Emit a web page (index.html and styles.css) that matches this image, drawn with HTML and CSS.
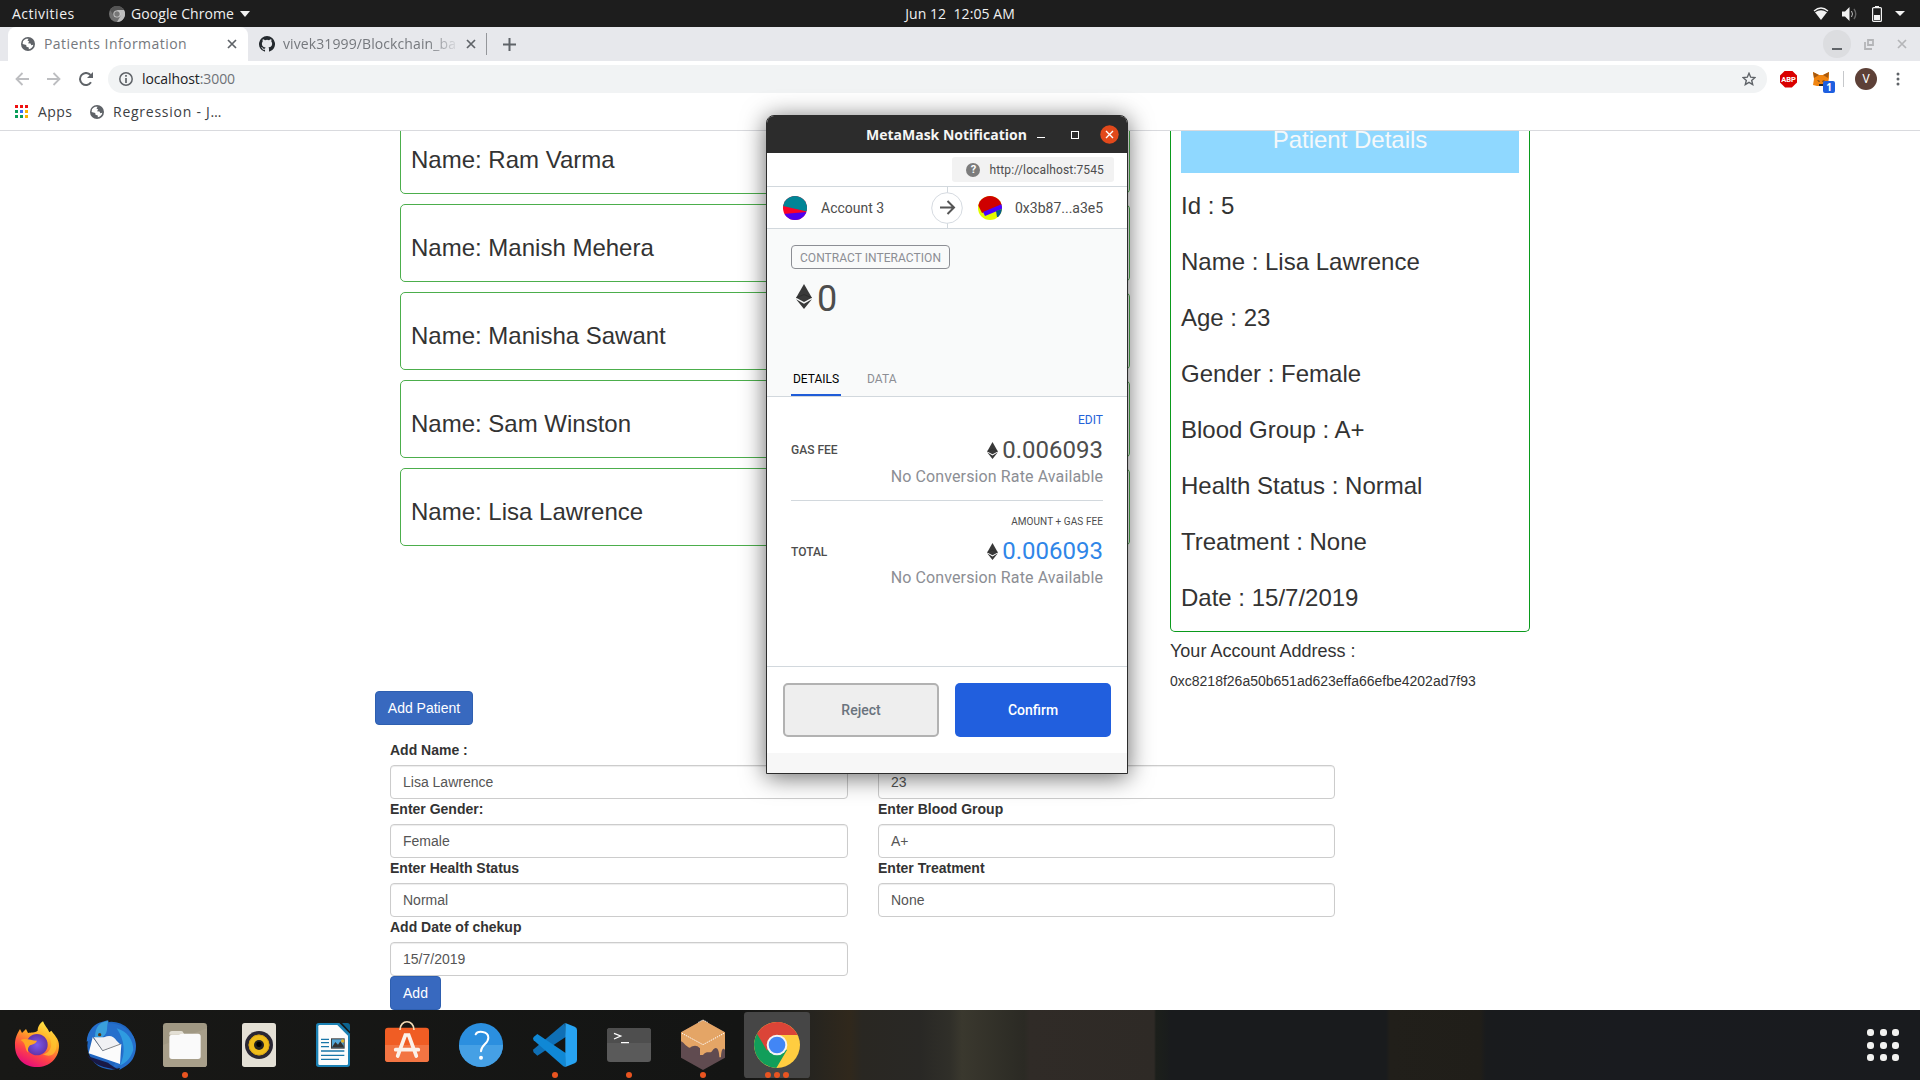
FILE: index.html
```html
<!DOCTYPE html>
<html lang="en">
<head>
<meta charset="utf-8">
<title>Patients Information</title>
<link rel="stylesheet" href="styles.css">
</head>
<body>
<svg class="defs" width="0" height="0">
  <symbol id="globe" viewBox="0 0 14 14"><circle cx="7" cy="7" r="7" fill="#5f6368"/><path d="M2 4.2C4 1.6 6 1.5 7.600 1.800L6.500 3.500 8.200 4.500 7 6.200 9.500 6.400 10.300 8.300 12.300 7.700C12 10 10 12 7.800 12.300L7.800 10.400 5.500 9.700 5.200 8 1.600 7Z" fill="#fff"/></symbol>
  <symbol id="cross" viewBox="0 0 10 10"><path d="M1 1l8 8M9 1L1 9" fill="none" stroke="currentColor" stroke-width="1.700"/></symbol>
  <symbol id="eth" viewBox="0 0 48 76"><path d="M24 0L48 42 24 55 0 42Z" fill="#393939"/><path d="M0 46l24 14 24-14-24 30Z" fill="#393939"/><path d="M0 42l24-10 24 10" fill="none" stroke="#282828" stroke-width="2"/></symbol>
</svg>

<header class="topbar">
  <div class="topbar-left">
    <span class="activities">Activities</span>
    <svg width="16" height="16" viewBox="0 0 16 16"><circle cx="8" cy="8" r="8" fill="#707070"/><path d="M8 4h7a8 8 0 0 1-7 12l3.500-6Z" fill="#bcbcbc"/><path d="M1 4l4 6a4 4 0 0 1 3-6h7A8 8 0 0 0 1 4Z" fill="#555"/><circle cx="8" cy="8" r="3.600" fill="#ccc"/><circle cx="8" cy="8" r="2.700" fill="#777"/></svg>
    <span class="app-name">Google Chrome</span>
    <svg width="10" height="6" viewBox="0 0 10 6"><path d="M0 0h10L5 6Z" fill="#f2f2f2"/></svg>
  </div>
  <div class="clock">Jun 12&nbsp; 12:05 AM</div>
  <div class="tray">
    <svg width="16" height="14" viewBox="0 0 16 14"><path d="M1 4Q8-2 15 4" fill="none" stroke="#f2f2f2" stroke-width="1.300"/><path d="M2 5.200Q8 1.500 14 5.200L8 13Z" fill="#f2f2f2"/></svg>
    <svg width="16" height="14" viewBox="0 0 16 14"><path d="M0 4.500h3L7.500 0v14L3 9.500H0Z" fill="#f2f2f2"/><path d="M9.500 4q2 3 0 6" fill="none" stroke="#bbb"/><path d="M12 2q3.500 5 0 10" fill="none" stroke="#666" stroke-width="1.400"/></svg>
    <svg width="10" height="16" viewBox="0 0 10 16"><path d="M3 0h4v2H3Z" fill="#f2f2f2"/><rect x=".6" y="1.600" width="8.800" height="13.800" rx="1" fill="none" stroke="#f2f2f2" stroke-width="1.200"/><path d="M2 9h6v5H2Z" fill="#f2f2f2"/></svg>
    <svg width="10" height="5" viewBox="0 0 10 5"><path d="M0 0h10L5 5Z" fill="#f2f2f2"/></svg>
  </div>
</header>

<nav class="tabstrip">
  <div class="tab tab-active">
    <svg width="14" height="14"><use href="#globe"/></svg>
    <span class="tab-title">Patients Information</span>
    <svg class="tab-close" width="10" height="10"><use href="#cross"/></svg>
  </div>
  <div class="tab tab-idle">
    <svg width="16" height="16" viewBox="0 0 16 16"><path d="M8 0a8 8 0 0 0-2.530 15.590c.4.070.55-.17.550-.380v-1.490c-2.230.48-2.700-.950-2.700-.950-.36-.92-.890-1.170-.890-1.170-.73-.5.060-.49.060-.49.800.06 1.230.830 1.230.830.710 1.220 1.870.87 2.330.66.070-.52.280-.87.500-1.070-1.770-.2-3.640-.89-3.640-3.950 0-.87.310-1.590.820-2.150-.08-.2-.360-1.010.080-2.110 0 0 .67-.21 2.200.82a7.600 7.600 0 0 1 4 0c1.530-1.040 2.200-.82 2.200-.82.440 1.100.160 1.910.080 2.110.51.560.820 1.280.820 2.150 0 3.070-1.870 3.750-3.650 3.950.29.250.54.730.54 1.480v2.200c0 .21.150.46.550.38A8 8 0 0 0 8 0Z" fill="#24292e"/></svg>
    <span class="tab-title">vivek31999/Blockchain_ba</span>
    <svg class="tab-close" width="10" height="10"><use href="#cross"/></svg>
  </div>
  <svg class="new-tab" width="13" height="13" viewBox="0 0 13 13"><path d="M6.500 0v13M0 6.500h13" stroke="#5f6368" stroke-width="2"/></svg>
  <div class="window-buttons">
    <span class="minimize"></span>
    <svg width="10" height="11" viewBox="0 0 10 11"><path d="M4 1h5v5H4ZM1 3v7h7" fill="none" stroke="#b4b5b8" stroke-width="1.800"/></svg>
    <svg class="window-close" width="10" height="10"><use href="#cross"/></svg>
  </div>
</nav>

<div class="toolbar">
  <svg width="14" height="14" viewBox="0 0 14 14"><path d="M14 7H1.500M7.500 1l-6 6 6 6" fill="none" stroke="#bdbec1" stroke-width="1.800"/></svg>
  <svg width="14" height="14" viewBox="0 0 14 14"><path d="M0 7h12.500M6.500 1l6 6-6 6" fill="none" stroke="#bdbec1" stroke-width="1.800"/></svg>
  <svg width="14" height="14" viewBox="0 0 14 14"><path d="M12 10.300A6 6 0 1 1 11.500 3" fill="none" stroke="#5f6368" stroke-width="2"/><path d="M14 0v6H8Z" fill="#5f6368"/></svg>
  <div class="omnibox">
    <svg width="14" height="14" viewBox="0 0 14 14"><circle cx="7" cy="7" r="6.200" fill="none" stroke="#5f6368" stroke-width="1.500"/><path d="M7 3v1.700M7 6v5" stroke="#5f6368" stroke-width="1.700"/></svg>
    <span class="url">localhost<span class="port">:3000</span></span>
    <svg width="14" height="14" viewBox="0 0 14 14"><path d="M7 1.300l1.700 3.900 4.200.4-3.200 2.800 1 4.200L7 10.400l-3.700 2.200 1-4.200L1.100 5.600l4.200-.4Z" fill="none" stroke="#5f6368" stroke-width="1.400"/></svg>
  </div>
  <span class="abp">ABP</span>
  <div class="fox">
    <svg width="16" height="16" viewBox="0 0 16 16"><path d="M0 1l6 3h4l6-3v6l-1 5-3 3H4l-4-1 1-6Z" fill="#f08410"/><path d="M0 1l6 3-5 3ZM16 1l-6 3 5 3Z" fill="#a8590d"/><path d="M4 9l3 1-1 1ZM12 9l-3 1 1 1Z" fill="#53381f"/><path d="M6 13h4v2H6Z" fill="#282828"/></svg>
    <span class="fox-badge">1</span>
  </div>
  <span class="toolbar-rule"></span>
  <span class="avatar">V</span>
  <svg width="4" height="14" viewBox="0 0 4 14"><circle cx="2" cy="2" r="1.500" fill="#5f6368"/><circle cx="2" cy="7" r="1.500" fill="#5f6368"/><circle cx="2" cy="12" r="1.500" fill="#5f6368"/></svg>
</div>

<div class="bookmarks">
  <svg width="13" height="13" viewBox="0 0 13 13"><path d="M0 0h3v3H0ZM5 0h3v3H5ZM10 0h3v3h-3Z" fill="#ee1111"/><path d="M0 5h3v3H0ZM0 10h3v3H0ZM5 10h3v3H5Z" fill="#0a9d58"/><path d="M5 5h3v3H5Z" fill="#3b6cf5"/><path d="M10 5h3v3h-3ZM10 10h3v3h-3Z" fill="#fbb300"/></svg>
  <span class="bm-apps">Apps</span>
  <svg width="14" height="14"><use href="#globe"/></svg>
  <span class="bm-page">Regression - J…</span>
</div>

<main class="page">
  <div class="columns">
    <div class="patients">
      <div class="patient">Name: Ram Varma</div>
      <div class="patient">Name: Manish Mehera</div>
      <div class="patient">Name: Manisha Sawant</div>
      <div class="patient">Name: Sam Winston</div>
      <div class="patient">Name: Lisa Lawrence</div>
    </div>
    <aside>
      <div class="details">
        <div class="details-title">Patient Details</div>
        <p>Id : 5</p>
        <p>Name : Lisa Lawrence</p>
        <p>Age : 23</p>
        <p>Gender : Female</p>
        <p>Blood Group : A+</p>
        <p>Health Status : Normal</p>
        <p>Treatment : None</p>
        <p>Date : 15/7/2019</p>
      </div>
      <div class="account-label">Your Account Address :</div>
      <div class="account-hash">0xc8218f26a50b651ad623effa66efbe4202ad7f93</div>
    </aside>
  </div>
  <button class="btn btn-patient">Add Patient</button>
  <form class="form">
    <div class="field"><label>Add Name :</label><div class="input">Lisa Lawrence</div></div>
    <div class="field"><label>Enter Age:</label><div class="input">23</div></div>
    <div class="field"><label>Enter Gender:</label><div class="input">Female</div></div>
    <div class="field"><label>Enter Blood Group</label><div class="input">A+</div></div>
    <div class="field"><label>Enter Health Status</label><div class="input">Normal</div></div>
    <div class="field"><label>Enter Treatment</label><div class="input">None</div></div>
    <div class="field"><label>Add Date of chekup</label><div class="input">15/7/2019</div></div>
  </form>
  <button class="btn btn-add">Add</button>
</main>

<section class="wallet">
  <div class="wallet-bar">
    <span class="wallet-title">MetaMask Notification</span>
    <span class="wb-min"></span>
    <span class="wb-max"></span>
    <svg width="19" height="19" viewBox="0 0 19 19"><circle cx="9.500" cy="9.500" r="9.200" fill="#e2491b"/><path d="M6 6l7 7M13 6l-7 7" stroke="#fff" stroke-width="1.400"/></svg>
  </div>
  <div class="network">
    <div class="network-box"><span class="q">?</span><span class="host">http://localhost:7545</span></div>
  </div>
  <div class="accounts">
    <svg width="24" height="24" viewBox="0 0 24 24"><clipPath id="c1"><circle cx="12" cy="12" r="12"/></clipPath><g clip-path="url(#c1)"><path d="M0 0h24v24H0Z" fill="#fc0226"/><path d="M0 0h24v15.500L0 10Z" fill="#018596"/><path d="M0 18l24-2v8H0Z" fill="#4f00ef"/></g></svg>
    <span class="from">Account 3</span>
    <div class="arrow"><svg width="32" height="32" viewBox="0 0 32 32"><circle cx="16" cy="16" r="15.300" fill="#fff" stroke="#d5dae0"/><path d="M9 15.500h13M16.500 9l6.500 6.500-6.500 6.500" fill="none" stroke="#555" stroke-width="2"/></svg></div>
    <svg width="24" height="24" viewBox="0 0 24 24"><clipPath id="c2"><circle cx="12" cy="12" r="12"/></clipPath><g clip-path="url(#c2)"><path d="M0 0h24v24H0Z" fill="#e1fc00"/><path d="M0 0h24v9L4 17 0 9Z" fill="#cf0000"/><path d="M5 16l19-8v5L7 20Z" fill="#4a00ff"/><path d="M18 15l6-2v8h-5Z" fill="#05598e"/></g></svg>
    <span class="to">0x3b87...a3e5</span>
  </div>
  <div class="summary">
    <div class="action">CONTRACT INTERACTION</div>
    <div class="amount"><svg width="16" height="25"><use href="#eth"/></svg>0</div>
    <div class="wallet-tabs"><span class="wt-on">DETAILS</span><span class="wt-off">DATA</span></div>
  </div>
  <div class="fees">
    <div class="fee-row gas">
      <span class="fee-label">GAS FEE</span>
      <div class="fee-values">
        <span class="edit">EDIT</span>
        <span class="value"><svg width="11" height="17"><use href="#eth"/></svg>0.006093</span>
        <span class="rate">No Conversion Rate Available</span>
      </div>
    </div>
    <div class="fee-row total">
      <span class="fee-label">TOTAL</span>
      <div class="fee-values">
        <span class="note">AMOUNT + GAS FEE</span>
        <span class="value value-total"><svg width="11" height="17"><use href="#eth"/></svg>0.006093</span>
        <span class="rate">No Conversion Rate Available</span>
      </div>
    </div>
  </div>
  <div class="wallet-footer">
    <button class="wf reject">Reject</button>
    <button class="wf confirm">Confirm</button>
  </div>
</section>

<footer class="dock">
  <svg class="cell" viewBox="0 30 222 210">
    <defs>
      <linearGradient id="ff" x1=".8" y1="0" x2=".3" y2="1"><stop offset="0" stop-color="#fff14a"/><stop offset=".4" stop-color="#ffa525"/><stop offset=".7" stop-color="#ff4545"/><stop offset="1" stop-color="#e5097f"/></linearGradient>
      <radialGradient id="fp"><stop offset="0" stop-color="#7b5cf0"/><stop offset="1" stop-color="#6434a8"/></radialGradient>
    </defs>
    <path d="M129 64C133 76 143 84 148 97L154 92C160 102 178 116 177 137C177 175 148 201 111 201C73 201 45 175 45 137C44 115 52 100 60 87L66 99L78 87L84 99C94 96 104 99 113 92C113 81 120 69 129 64Z" fill="url(#ff)"/>
    <circle cx="111" cy="134" r="32" fill="url(#fp)"/>
    <path d="M62 120C75 112 93 122 111 122C107 134 91 133 88 138C82 145 84 150 85 158C72 147 81 131 62 120Z" fill="#ffa524"/>
    <path d="M138 101C166 125 153 160 128 163C166 180 178 142 164 108Z" fill="#ffc82f" opacity=".7"/>
  </svg>
  <svg class="cell" viewBox="222 30 222 210">
    <circle cx="334" cy="137" r="72" fill="#1f65c0"/>
    <path d="M260 125C262 90 285 70 305 66L325 60L318 70C360 65 408 95 408 137C408 170 392 190 374 200L358 210L362 196L336 207C345 180 370 175 366 150C362 118 330 100 310 110L286 112Z" fill="#256fcc"/>
    <path d="M350 85C382 94 400 120 400 150C390 180 372 192 360 196C378 160 374 120 350 85Z" fill="#2f9be0"/>
    <path d="M285 112C285 78 300 66 326 62C316 80 330 94 307 112Z" fill="#3aa0dc"/>
    <circle cx="299" cy="104" r="5" fill="#5a3a17"/>
    <path d="M262 168l62 20q10 8 30 20Q290 205 262 168Z" fill="#191945"/>
    <path d="M278 112L308 152L352 136L364 132L360 192L266 160Z" fill="#fbfbfb"/>
    <path d="M280 112L312 112Q336 100 350 122L362 134L308 152Z" fill="#f0f1f4"/>
    <path d="M280 112l28 40 54-20" fill="none" stroke="#555" stroke-width="2"/>
  </svg>
  <svg class="cell" viewBox="444 30 222 210">
    <rect x="489" y="69" width="132" height="132" rx="10" fill="#a09883"/><path d="M489 135l132-50v106q0 10-10 10H499q-10 0-10-10Z" fill="#a89f8a"/>
    <path d="M508 101q0-8 8-8h28q5 0 6 5l4 6h-46Z" fill="#e3dfd4"/><path d="M508 112q0-8 8-8h20q6-3 12-3h46q8 0 8 8v60q0 8-8 8h-78q-8 0-8-8Z" fill="#fafafa"/>
    <circle cx="555" cy="225" r="9" fill="#e95420"/>
  </svg>
  <svg class="cell" viewBox="666 30 222 210">
    <rect x="726" y="69" width="102" height="132" rx="8" fill="#e4e0d5"/><circle cx="777" cy="135" r="42" fill="#2a2733"/><circle cx="777" cy="135" r="31" fill="#efbd1b"/><circle cx="777" cy="135" r="30" fill="none" stroke="#d9a514" stroke-width="3"/><circle cx="777" cy="135" r="15" fill="#222"/><circle cx="777" cy="133" r="8" fill="#000"/>
  </svg>
  <svg class="cell" viewBox="888 30 222 210">
    <path d="M956 69h62l32 32v92q0 8-8 8h-86q-8 0-8-8V77q0-8 8-8Z" fill="#1b81b4"/><path d="M1026 69h16q8 0 8 8v18Z" fill="#0b638f"/>
    <path d="M959 75h53l32 32v84q0 4-4 4h-81q-4 0-4-4V79q0-4 4-4Z" fill="#fcfcfc"/>
    <path d="M963 118h24M963 128h24M963 140h24M963 153h70M963 166h70M963 178h54" stroke="#1976a8" stroke-width="4"/>
    <rect x="993" y="115" width="41" height="31" fill="#3d3d3d"/><path d="M996 118h35v24h-35Z" fill="#54a7d7"/><path d="M996 142l10-16 8 8 7-10 10 14v4Z" fill="#333"/><circle cx="1028" cy="123" r="5" fill="#e2b227"/>
  </svg>
  <svg class="cell" viewBox="1110 30 222 210">
    <rect x="1155" y="83" width="132" height="103" rx="9" fill="#f05d24"/><path d="M1155 135h132v42q0 9-9 9h-114q-9 0-9-9Z" fill="#f37543"/>
    <path d="M1200 90C1200 57 1242 57 1242 90" fill="none" stroke="#f4dcb6" stroke-width="5"/>
    <path d="M1193 168l23-63h10l23 63M1187 149h68" fill="none" stroke="#fbf1ea" stroke-width="11" stroke-linecap="round"/>
  </svg>
  <svg class="cell" viewBox="1332 30 222 210">
    <circle cx="1443" cy="135" r="66" fill="#2b8fdf"/><path d="M1377 135a66 66 0 0 0 132 0Z" fill="#45a0e5"/>
    <path d="M1427 103C1432 92 1465 92 1465 113C1465 132 1443 134 1443 154" fill="none" stroke="#fff" stroke-width="6" stroke-linecap="round"/><circle cx="1443" cy="173" r="6" fill="#fff"/>
  </svg>
  <svg class="cell" viewBox="114 30 222 210">
    <path d="M172 167L161 157Q157 153 161 148L254 69L258 110Z" fill="#0f6fb5"/>
    <path d="M172 102L161 111Q157 116 161 121L250 199L256 201L258 160Z" fill="#1088d5"/>
    <path d="M256 69L284 80Q291 83 291 90V180Q291 187 284 190L256 201Z" fill="#27a3f2"/>
    <circle cx="225" cy="225" r="9" fill="#e95420"/>
  </svg>
  <svg class="cell" viewBox="336 30 222 210">
    <rect x="381" y="84" width="132" height="102" rx="9" fill="#5a5a5a"/><path d="M381 129V93q0-9 9-9h114q9 0 9 9v36Z" fill="#4e4e4e"/>
    <path d="M402 100l20 8-20 9M423 128h24" fill="none" stroke="#fff" stroke-width="4"/><circle cx="447" cy="225" r="9" fill="#e95420"/>
  </svg>
  <svg class="cell" viewBox="558 30 222 210">
    <path d="M669 60L735 97V173L669 210L603 173V97Z" fill="#604b50"/>
    <path d="M669 60L735 97V150C730 142 724 145 723 172H718C717 140 706 139 697 152C690 163 680 150 669 165H660V145C650 134 640 136 630 143C620 143 615 130 603 124V97Z" fill="#e4a566"/>
    <path d="M655 67l14-7 14 7M606 100l63 34 63-34" fill="none" stroke="#fff" stroke-width="3" stroke-dasharray="4 3"/>
    <circle cx="669" cy="225" r="9" fill="#e95420"/>
  </svg>
  <svg class="cell" viewBox="780 30 222 210">
    <rect x="792" y="36" width="198" height="198" rx="10" fill="#464646"/>
    <circle cx="891" cy="135" r="69" fill="#ffcd40"/>
    <path d="M891 135L835 95A69 69 0 0 0 889 204L921 150Z" fill="#119e5a"/>
    <path d="M831 101A69 69 0 0 1 953 105H891L861 152Z" fill="#db4437"/>
    <circle cx="891" cy="135" r="31" fill="#f4f4f4"/><circle cx="891" cy="135" r="25" fill="#4286f5"/>
    <circle cx="864" cy="225" r="9" fill="#e95420"/><circle cx="891" cy="225" r="9" fill="#e95420"/><circle cx="918" cy="225" r="9" fill="#e95420"/>
  </svg>
  <div class="app-grid"><i></i><i></i><i></i><i></i><i></i><i></i><i></i><i></i><i></i></div>
</footer>
</body>
</html>
```
FILE: styles.css
```css
* { box-sizing: border-box; }
body {
  margin: 0;
  width: 1920px;
  height: 1080px;
  overflow: hidden;
  position: relative;
  display: flex;
  flex-direction: column;
  background: #fff;
  color: #333;
  font-family: "Liberation Sans", Arial, sans-serif;
  font-size: 14px;
}
svg { display: block; flex: none; }
.defs { position: absolute; }
button { font: inherit; margin: 0; padding: 0; }

/* desktop bar */
.topbar {
  height: 27px;
  flex: none;
  display: grid;
  grid-template-columns: 1fr auto 1fr;
  align-items: center;
  background: #1d1d1d;
  color: #f0f0f0;
  font: 14px/27px "Open Sans", "Noto Sans", sans-serif;
  white-space: nowrap;
}
.topbar-left { display: flex; align-items: center; padding-left: 12px; }
.activities { width: 97px; letter-spacing: .5px; }
.app-name { width: 114px; padding-left: 6px; letter-spacing: .08px; }
.topbar-left svg:last-child { margin-left: 1px; }
.clock { letter-spacing: .06px; }
.tray { display: flex; align-items: center; justify-content: flex-end; gap: 13px; padding-right: 15px; }
.tray svg:nth-child(3) { margin: 0 0 0 1px; }

/* browser chrome */
.tabstrip {
  height: 34px;
  flex: none;
  display: flex;
  align-items: center;
  padding-left: 8px;
  background: #e7e8ec;
  color: #75787d;
  font: 14px/34px "Open Sans", "Noto Sans", sans-serif;
  white-space: nowrap;
}
.tab { display: flex; align-items: center; height: 34px; }
.tab-active { width: 240px; padding: 0 11px 0 13px; background: #fff; border-radius: 8px 8px 0 0; }
.tab-active .tab-title { margin-left: 9px; flex: 1; letter-spacing: .45px; }
.tab-idle {
  width: 239px;
  padding: 0 10px 0 11px;
  border-right: 1px solid transparent;
  border-image: linear-gradient(transparent 20%, #94969a 20%, #94969a 80%, transparent 80%) 1;
}
.tab-idle .tab-title {
  width: 177px;
  margin-left: 8px;
  margin-right: 6px;
  overflow: hidden;
  letter-spacing: .1px;
  -webkit-mask-image: linear-gradient(90deg, #000 82%, transparent);
  mask-image: linear-gradient(90deg, #000 82%, transparent);
}
.tab-close { color: #5f6368; }
.new-tab { margin-left: 16px; }
.window-buttons { display: flex; align-items: center; margin-left: auto; padding-right: 13px; }
.minimize {
  width: 28px;
  height: 28px;
  margin-right: 13px;
  border-radius: 50%;
  background: linear-gradient(#5f6368, #5f6368) 50% 18px / 10px 2px no-repeat #dcdde0;
}
.window-close { margin-left: 23px; color: #b4b5b8; }
.toolbar { height: 36px; flex: none; display: flex; align-items: center; padding: 0 20px 0 15px; }
.toolbar > svg:nth-child(2) { margin-left: 18px; }
.toolbar > svg:nth-child(3) { margin-left: 18px; }
.omnibox {
  width: 1659px;
  height: 28px;
  margin-left: 15px;
  padding: 0 11px;
  border-radius: 14px;
  background: #f1f3f4;
  display: flex;
  align-items: center;
}
.url { flex: 1; margin-left: 9px; color: #202124; font: 14px/28px "Open Sans", "Noto Sans", sans-serif; letter-spacing: -.1px; }
.port { color: #6f7277; }
.abp {
  width: 17px;
  height: 17px;
  margin-left: 13px;
  margin-right: 1px;
  background: #d90000;
  clip-path: polygon(30% 0, 70% 0, 100% 30%, 100% 70%, 70% 100%, 30% 100%, 0 70%, 0 30%);
  color: #fff;
  font: bold 7.500px/17px Roboto, sans-serif;
  text-align: center;
}
.fox { position: relative; margin-left: 15px; }
.fox-badge {
  position: absolute;
  left: 10px;
  top: 10px;
  width: 12px;
  height: 12px;
  border-radius: 2px;
  background: #1e5fe0;
  color: #fff;
  font: bold 10px/12px "Open Sans", sans-serif;
  text-align: center;
}
.toolbar-rule { width: 1px; height: 16px; margin-left: 14px; background: #c6c8cb; }
.avatar {
  width: 22px;
  height: 22px;
  margin: 0 19px 0 11px;
  border-radius: 50%;
  background: #5d4037;
  color: #fff;
  font: 12px/22px Roboto, sans-serif;
  text-align: center;
}
.bookmarks {
  height: 34px;
  flex: none;
  display: flex;
  align-items: center;
  padding: 0 0 4px 15px;
  border-bottom: 1px solid #d9dade;
  color: #3c4043;
  font: 14px/28px "Open Sans", "Noto Sans", sans-serif;
}
.bm-apps { width: 52px; margin-left: 10px; letter-spacing: .45px; }
.bm-page { margin-left: 9px; letter-spacing: .75px; }

/* page */
.page { height: 879px; flex: none; overflow: hidden; padding-left: 375px; }
.columns { height: 575px; margin: -15px 0 0 25px; display: grid; grid-template-columns: 730px 360px; gap: 40px; }
.patients { display: flex; flex-direction: column; gap: 10px; }
.patient { height: 78px; padding: 30px 10px 0; border: 1px solid #4cae4c; border-radius: 5px; font-size: 24px; line-height: 26px; }
.details { padding: 0 10px 20px; border: 1px solid #0a9a1c; border-top: 0; border-radius: 0 0 5px 5px; font-size: 24px; line-height: 26px; }
.details-title { height: 57px; background: #8fd8ff; color: #f5f8fa; line-height: 48px; text-align: center; }
.details p { margin: 20px 0 30px; }
.details p + p { margin-top: 0; }
.details p:last-child { margin-bottom: 0; }
.account-label { margin-top: 9px; font-size: 18px; line-height: 20px; }
.account-hash { margin-top: 10px; line-height: 20px; }
.btn { display: block; height: 34px; border: 1px solid #2e5fb0; border-radius: 4px; background: #3869bf; color: #fff; font-size: 14px; }
.btn-patient { width: 98px; }
.btn-add { width: 51px; margin-left: 15px; }
.form { margin: 15px 0 0 15px; display: grid; grid-template-columns: 458px 457px; column-gap: 30px; }
.field { height: 59px; }
.field label { display: block; height: 25px; font-weight: 700; line-height: 20px; }
.input {
  height: 34px;
  padding: 0 12px;
  border: 1px solid #ccc;
  border-radius: 4px;
  box-shadow: inset 0 1px 1px rgba(0,0,0,.075);
  color: #555;
  line-height: 32px;
}

/* wallet pop-up window, floating over the browser */
.wallet {
  position: absolute;
  left: 766px;
  top: 115px;
  width: 362px;
  height: 659px;
  border: 1px solid #2c2c2c;
  border-radius: 8px 8px 0 0;
  background: #f7f7f7;
  box-shadow: 0 3px 24px rgba(0,0,0,.6);
  overflow: hidden;
  color: #4d4d4d;
  font-family: Roboto, sans-serif;
}
.wallet-bar { height: 37px; display: flex; align-items: center; padding: 0 8px 0 99px; background: #2c2c2c; }
.wallet-title { width: 171px; color: #f5f5f5; font: bold 14px/37px "Open Sans", sans-serif; white-space: nowrap; letter-spacing: 0; }
.wb-min { width: 8px; height: 1px; margin: 5px 26px 0 0; background: #fff; }
.wb-max { width: 8px; height: 8px; margin-right: auto; border: 1px solid #fff; }
.network { height: 34px; padding: 4px 13px 0 0; background: #fff; border-bottom: 1px solid #d2d8dd; display: flex; justify-content: flex-end; }
.network-box { width: 162px; height: 25px; border-radius: 3px; background: #f2f2f2; display: flex; align-items: center; justify-content: flex-end; padding-right: 10px; font-size: 12px; }
.host { padding-top: 1px; letter-spacing: .14px; }
.q { width: 14px; height: 14px; margin-right: 9px; border-radius: 50%; background: #7c7c7c; color: #fff; font: bold 11px/14px Roboto, sans-serif; text-align: center; }
.accounts { height: 42px; display: flex; align-items: center; padding-left: 16px; background: #fff; border-bottom: 1px solid #d2d8dd; font-size: 14px; }
.from { width: 124px; padding-left: 14px; }
.arrow { height: 41px; display: flex; align-items: center; margin-right: 15px; background: linear-gradient(#d2d8dd, #d2d8dd) 50% 0 / 1px 100% no-repeat; }
.to { margin-left: 13px; }
.summary { height: 168px; padding: 16px 24px 0; background: #f9fafa; border-bottom: 1px solid #d2d8dd; display: flex; flex-direction: column; }
.action { width: 159px; height: 24px; border: 1px solid #8c8e94; border-radius: 4px; color: #8c8e94; font-size: 12px; line-height: 24px; letter-spacing: .05px; text-align: center; white-space: nowrap; }
.amount { height: 58px; display: flex; gap: 5px; padding-left: 5px; font-size: 36px; line-height: 60px; }
.amount svg { margin-top: 15px; }
.wallet-tabs { display: flex; margin-top: auto; font-size: 12px; line-height: 30px; }
.wt-on { width: 50px; border-bottom: 2px solid #1f5cd8; color: #000; text-align: center; }
.wt-off { margin-left: 26px; color: #8c8e94; letter-spacing: .1px; }
.fees { height: 269px; padding: 0 24px; background: #fff; }
.fee-row { display: flex; justify-content: space-between; }
.fee-row.gas { height: 104px; border-bottom: 1px solid #d2d8dd; }
.fee-label { font-size: 12px; font-weight: 500; line-height: 16px; padding-top: 45px; }
.total .fee-label { padding-top: 43px; }
.fee-values { display: flex; flex-direction: column; align-items: flex-end; }
.edit { height: 39px; padding-top: 15px; color: #2462d8; font-size: 12px; line-height: 16px; }
.note { height: 36px; padding-top: 13px; font-size: 10px; line-height: 16px; letter-spacing: .07px; }
.value { display: flex; align-items: center; gap: 4px; font-size: 24px; line-height: 28px; }
.value-total { color: #2f86e8; }
.rate { color: #8c8e94; font-size: 16px; line-height: 26px; letter-spacing: .12px; }
.wallet-footer { height: 87px; padding: 16px; display: flex; gap: 16px; background: #fff; border-top: 1px solid #d2d8dd; }
.wf { width: 156px; height: 54px; border-radius: 5px; font-size: 14px; font-weight: 500; }
.reject { border: 2px solid #b2b2b2; background: #eee; color: #6a737d; }
.confirm { border: 0; background: #215fde; color: #fff; }

/* dock */
.dock {
  height: 70px;
  flex: none;
  display: flex;
  align-items: center;
  background: linear-gradient(90deg, #181816 0, #141514 740px, #26241f 812px, #30281c 850px, #292722 862px, #292825 920px, #302f29 950px, #3a382e 962px, #2b2a24 1024px, #302b27 1030px, #2e2a26 1154px, #1c1f1b 1156px, #1a1d1c 1166px, #191b1d 1170px, #191b1d 1386px, #211f1a 1390px, #201e19 1480px, #191b1d 1486px, #191b1f 1620px, #191b1e 1920px);
}
.cell { width: 74px; height: 70px; }
.app-grid { margin: 0 21px 0 auto; display: grid; grid-template-columns: repeat(3, 7px); gap: 5.500px; }
.app-grid i { height: 7px; border-radius: 3px; background: #f2f2f0; }
```
